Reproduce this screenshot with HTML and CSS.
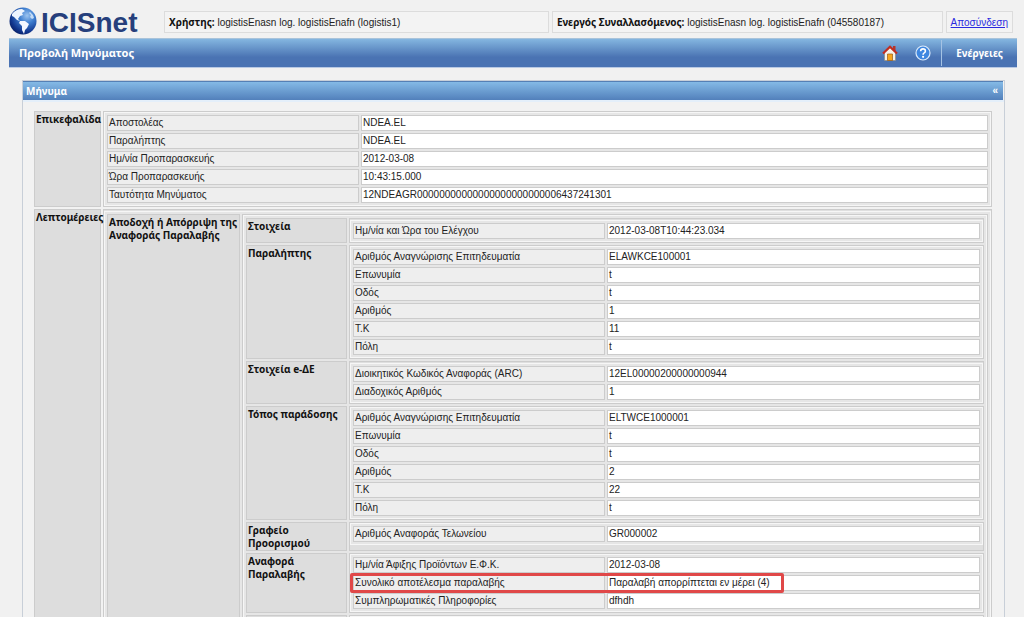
FILE: index.html
```
<!DOCTYPE html>
<html lang="el">
<head>
<meta charset="utf-8">
<title>ICISnet - Προβολή Μηνύματος</title>
<link rel="stylesheet" href="styles.css">
</head>
<body>
<header class="top">
  <div class="logo">
    <svg class="globe" viewBox="0 0 28 28" aria-hidden="true">
      <defs>
        <radialGradient id="sea" cx="0.65" cy="0.3" r="0.8">
          <stop offset="0" stop-color="#9cc4f0"/>
          <stop offset="0.35" stop-color="#3f7fd0"/>
          <stop offset="0.75" stop-color="#12378f"/>
          <stop offset="1" stop-color="#061a5c"/>
        </radialGradient>
      </defs>
      <circle cx="14" cy="14" r="13.5" fill="url(#sea)"/>
      <path d="M3 7 Q7 2 13 2 L16 4 L13 6 L14 8 L11 9 L9 12 L11 14 L8 13 L5 10 L3 9 Z" fill="#eef5ff"/>
      <path d="M11 14 L16 14 L20 17 L18 21 L16 23 L15 27 L13 23 L13 19 L10 16 Z" fill="#f4f8ff"/>
      <path d="M21 5 L24 8 L25 11 L23 12 L21 10 L22 8 L20 6 Z" fill="#c4dcf6"/>
    </svg>
    <span class="brand">ICISnet</span>
  </div>
  <div class="session">
    <div class="box"><b>Χρήστης:</b> logistisEnasn log. logistisEnafn (logistis1)</div>
    <div class="box"><b>Ενεργός Συναλλασόμενος:</b> logistisEnasn log. logistisEnafn (045580187)</div>
    <div class="box exit"><a href="#">Αποσύνδεση</a></div>
  </div>
</header>
<nav class="bar">
  <h1>Προβολή Μηνύματος</h1>
  <button class="icon" type="button" aria-label="Αρχική">
    <svg viewBox="0 0 16 16" aria-hidden="true">
      <path d="M11 1h2.5v5H11z" fill="#b5352a"/>
      <path d="M2.5 7.5L8 2.5l5.500 5V15.500h-11z" fill="#f6f3ea" stroke="#8c8472" stroke-width="0.6"/>
      <path d="M1 8.500L8 1.800l7 6.700" fill="none" stroke="#c02d22" stroke-width="2.200"/>
      <path d="M5.500 9h5v6.500h-5z" fill="#f7a51c" stroke="#9b5a13" stroke-width="0.7"/>
    </svg>
  </button>
  <button class="icon" type="button" aria-label="Βοήθεια">
    <svg viewBox="0 0 16 16" aria-hidden="true">
      <circle cx="8" cy="8" r="7" fill="#3f87e0" stroke="#dcebfb" stroke-width="1.200"/>
      <path d="M5.600 6.200Q5.700 3.900 8 3.900T10.400 6Q10.400 7.200 9.200 7.900Q8.100 8.500 8.100 9.700" fill="none" stroke="#fff" stroke-width="1.600"/>
      <circle cx="8.100" cy="11.800" r="1.100" fill="#fff"/>
    </svg>
  </button>
  <button class="actions" type="button">Ενέργειες</button>
</nav>
<main class="panel">
  <div class="panel-head">
    <h2>Μήνυμα</h2>
    <button class="fold" type="button" aria-label="Σύμπτυξη">«</button>
  </div>
  <div class="panel-body">
    <table class="grid">
      <colgroup><col class="c-main"><col></colgroup>
      <tr>
        <th scope="row">Επικεφαλίδα</th>
        <td>
          <table class="leaf">
            <colgroup><col class="c-label"><col></colgroup>
            <tr><td>Αποστολέας</td><td>NDEA.EL</td></tr>
            <tr><td>Παραλήπτης</td><td>NDEA.EL</td></tr>
            <tr><td>Ημ/νία Προπαρασκευής</td><td>2012-03-08</td></tr>
            <tr><td>Ώρα Προπαρασκευής</td><td>10:43:15.000</td></tr>
            <tr><td>Ταυτότητα Μηνύματος</td><td>12NDEAGR00000000000000000000000006437241301</td></tr>
          </table>
        </td>
      </tr>
      <tr>
        <th scope="row">Λεπτομέρειες</th>
        <td class="roomy">
          <table class="grid framed">
            <colgroup><col class="c-part"><col></colgroup>
            <tr>
              <th scope="row">Αποδοχή ή Απόρριψη της Αναφοράς Παραλαβής</th>
              <td>
                <table class="grid framed">
                  <colgroup><col class="c-group"><col></colgroup>
                  <tr>
                    <th scope="row">Στοιχεία</th>
                    <td class="roomy">
                      <table class="leaf">
                        <colgroup><col class="c-label"><col></colgroup>
                        <tr><td>Ημ/νία και Ώρα του Ελέγχου</td><td>2012-03-08T10:44:23.034</td></tr>
                      </table>
                    </td>
                  </tr>
                  <tr>
                    <th scope="row">Παραλήπτης</th>
                    <td>
                      <table class="leaf">
                        <colgroup><col class="c-label"><col></colgroup>
                        <tr><td>Αριθμός Αναγνώρισης Επιτηδευματία</td><td>ELAWKCE100001</td></tr>
                        <tr><td>Επωνυμία</td><td>t</td></tr>
                        <tr><td>Οδός</td><td>t</td></tr>
                        <tr><td>Αριθμός</td><td>1</td></tr>
                        <tr><td>Τ.Κ</td><td>11</td></tr>
                        <tr><td>Πόλη</td><td>t</td></tr>
                      </table>
                    </td>
                  </tr>
                  <tr>
                    <th scope="row">Στοιχεία e-ΔΕ</th>
                    <td class="roomy">
                      <table class="leaf">
                        <colgroup><col class="c-label"><col></colgroup>
                        <tr><td>Διοικητικός Κωδικός Αναφοράς (ARC)</td><td>12EL00000200000000944</td></tr>
                        <tr><td>Διαδοχικός Αριθμός</td><td>1</td></tr>
                      </table>
                    </td>
                  </tr>
                  <tr>
                    <th scope="row">Τόπος παράδοσης</th>
                    <td>
                      <table class="leaf">
                        <colgroup><col class="c-label"><col></colgroup>
                        <tr><td>Αριθμός Αναγνώρισης Επιτηδευματία</td><td>ELTWCE1000001</td></tr>
                        <tr><td>Επωνυμία</td><td>t</td></tr>
                        <tr><td>Οδός</td><td>t</td></tr>
                        <tr><td>Αριθμός</td><td>2</td></tr>
                        <tr><td>Τ.Κ</td><td>22</td></tr>
                        <tr><td>Πόλη</td><td>t</td></tr>
                      </table>
                    </td>
                  </tr>
                  <tr>
                    <th scope="row">Γραφείο Προορισμού</th>
                    <td>
                      <table class="leaf">
                        <colgroup><col class="c-label"><col></colgroup>
                        <tr><td>Αριθμός Αναφοράς Τελωνείου</td><td>GR000002</td></tr>
                      </table>
                    </td>
                  </tr>
                  <tr>
                    <th scope="row">Αναφορά Παραλαβής</th>
                    <td>
                      <table class="leaf">
                        <colgroup><col class="c-label"><col></colgroup>
                        <tr><td>Ημ/νία Άφιξης Προϊόντων Ε.Φ.Κ.</td><td>2012-03-08</td></tr>
                        <tr><td class="marked">Συνολικό αποτέλεσμα παραλαβής</td><td>Παραλαβή απορρίπτεται εν μέρει (4)</td></tr>
                        <tr><td>Συμπληρωματικές Πληροφορίες</td><td>dfhdh</td></tr>
                      </table>
                    </td>
                  </tr>
                  <tr>
                    <th></th>
                    <td><table class="leaf"><tr><td></td></tr></table></td>
                  </tr>
                </table>
              </td>
            </tr>
          </table>
        </td>
      </tr>
    </table>
  </div>
</main>
</body>
</html>
```
FILE: styles.css
```
*, ::after { box-sizing: border-box; }

html { background: #f1f1f1; }

body {
  margin: 0;
  padding: 7px 7px 0 9px;
  height: 100vh;
  overflow: hidden;
  font: 10px/12px "Liberation Sans", Arial, sans-serif;
  color: #222;
}

h1, h2 { margin: 0; font-weight: bold; }

button {
  padding: 0;
  border: 0;
  background: none;
  color: #fff;
  font: inherit;
  cursor: pointer;
}

b, th, h1, h2, .actions { font-family: "Noto Sans", "Open Sans", sans-serif; }

/* Top strip: logo and session */
.top { display: flex; height: 31px; }

.logo { display: flex; gap: 4px; width: 155px; }

.globe { width: 28px; height: 28px; }

.brand {
  font: bold 28px/32px "Liberation Sans", Arial, sans-serif;
  color: #263f7c;
}

.session {
  display: flex;
  flex: 1;
  gap: 3px;
  margin: 4px 4px 5px 0;
}

.box {
  flex: 386;
  padding: 4px;
  border: 1px solid #dcdcdc;
  background: #f3f3f3;
  white-space: nowrap;
  line-height: 13px;
}

.box + .box { flex: 392; }
.box.exit { flex: none; }
.box b { font-size: 10px; color: #111; }
.box a { color: #2a2ae0; }

/* Navigation bar */
.bar {
  display: flex;
  align-items: center;
  gap: 17px;
  height: 30px;
  padding: 0 14px 0 10px;
  border-top: 1px solid #a9c3da;
  border-bottom: 1px solid #b9c9e4;
  background: linear-gradient(#84b6e0, #4a73b3 65%, #4a73b3);
}

.bar h1 { flex: 1; font-size: 11px; line-height: 16px; color: #fff; }

.icon { width: 16px; height: 16px; }
.icon svg { display: block; width: 16px; height: 16px; }

.actions {
  height: 26px;
  margin-left: -7px;
  padding-left: 14px;
  border-left: 1px solid #a5c3e4;
  font-size: 10px;
  font-weight: bold;
}

/* Message panel */
.panel {
  margin: 12px 12px 0 13px;
  border: 1px solid #c8cfd8;
  background: #f2f2f2;
}

.panel-head {
  display: flex;
  align-items: center;
  justify-content: space-between;
  height: 19px;
  margin: 0 1px 0 0;
  padding: 0 5px 0 3px;
  border-top: 1px solid #5580b5;
  background: linear-gradient(#84bae6, #5280bb);
}

.panel-head h2 { font-size: 10px; color: #fff; }
.fold { font-weight: bold; }

.panel-body { padding: 7px 10px 10px 9px; border-top: 2px solid #e4effa; }

/* Nested record tables */
table {
  width: 100%;
  border-spacing: 2px;
  table-layout: fixed;
}

td, th { padding: 0; border: 1px solid #ccc; vertical-align: top; }

.c-main { width: 67px; }
.c-part { width: 133px; }
.c-group { width: 101px; }
.c-label { width: 252px; }

.grid > tbody > tr > td { background: #dfdfdf; }
.grid > tbody > tr > .roomy { padding-top: 1px; }
.framed, .leaf { border: 1px solid #f6f6f6; background: #e6e6e6; }

th {
  padding: 1px 0 0 1px;
  background: #ddd;
  text-align: left;
  font-size: 10px;
  line-height: 13px;
  color: #111;
}

.leaf td { height: 16px; padding-left: 1px; background: #fff; line-height: 14px; }
.leaf td:first-child { position: relative; background: #eee; }

/* Red frame that spans the marked label and its value */
.marked::after {
  content: "";
  position: absolute;
  z-index: 1;
  top: -3px;
  left: -4px;
  width: 434px;
  height: 20px;
  border: 3px solid #e04848;
  border-radius: 2px;
}
```
